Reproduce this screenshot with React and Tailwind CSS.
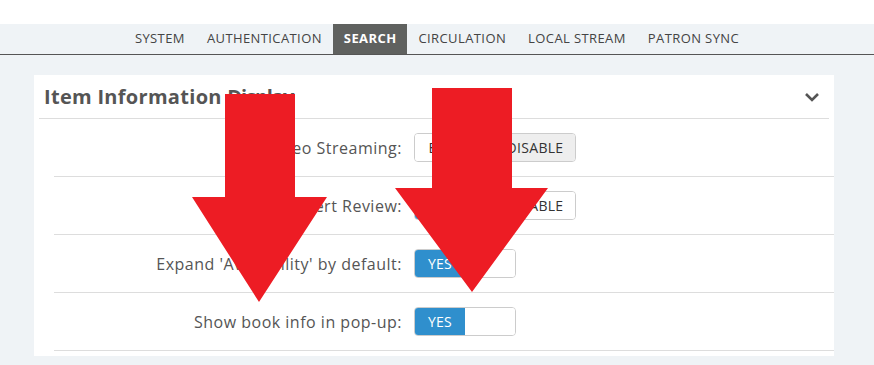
import React from "react";

const tabs = ["SYSTEM", "AUTHENTICATION", "SEARCH", "CIRCULATION", "LOCAL STREAM", "PATRON SYNC"];

const Toggle = ({ left, right, active, wide }) => {
  const w = wide ? "w-[80px]" : "w-[50px]";
  return (
    <div className="flex h-[29px] rounded-[4px] border border-[#cccccc] overflow-hidden text-[14px] tracking-[0.3px]">
      <div
        className={`${w} flex items-center justify-center ${
          active === "left" ? "bg-[#2f8fcd] text-white" : "bg-white text-[#333]"
        }`}
      >
        {left}
      </div>
      <div
        className={`${w} flex items-center justify-center ${
          active === "right" ? "bg-[#eeeeee] text-[#333]" : "bg-white text-[#333]"
        }`}
      >
        {right}
      </div>
    </div>
  );
};

const Row = ({ label, children }) => (
  <div className="ml-[20px] h-[58px] flex items-center border-b border-[#dddddd]">
    <div className="w-[348px] text-right text-[16px] tracking-[0.5px] text-[#555555]">{label}</div>
    <div className="ml-[12px]">{children}</div>
  </div>
);

export default function App() {
  return (
    <div
      className="relative w-[874px] h-[365px] overflow-hidden bg-[#eff3f6]"
      style={{ fontFamily: "'Open Sans', 'Noto Sans', sans-serif" }}
    >
      <div className="h-[24px] bg-white" />
      <nav className="h-[31px] flex justify-center border-b border-[#555555] text-[13px] tracking-[0.4px] text-[#444]">
        {tabs.map((t) => (
          <div
            key={t}
            className={`px-[11px] flex items-center ${
              t === "SEARCH" ? "bg-[#5f615f] text-white font-bold" : ""
            }`}
          >
            {t}
          </div>
        ))}
      </nav>

      <div className="mt-[20px] ml-[34px] w-[800px] bg-white pb-[5px]">
        <div className="mx-[5px] h-[44px] flex items-center justify-between border-b border-[#dddddd] pl-[5px] pr-[9px]">
          <h2 className="text-[20px] font-bold tracking-[0.3px] text-[#555555]">
            Item Information <span className="tracking-[-1px]">Display</span>
          </h2>
          <svg width="16" height="10" viewBox="0 0 16 10">
            <path d="M2 2 L8 8 L14 2" fill="none" stroke="#555" strokeWidth="2.6" />
          </svg>
        </div>
        <Row label="Video Streaming:">
          <Toggle left="ENABLE" right="DISABLE" active="right" wide />
        </Row>
        <Row label="Expert Review:">
          <Toggle left="ENABLE" right="DISABLE" active="left" wide />
        </Row>
        <Row label="Expand 'Availability' by default:">
          <Toggle left="YES" right="" active="left" />
        </Row>
        <Row label="Show book info in pop-up:">
          <Toggle left="YES" right="" active="left" />
        </Row>
      </div>

      <svg className="absolute inset-0 pointer-events-none" width="874" height="365">
        <polygon
          points="225,94 295,94 295,197 327,197 259,302 192,197 225,197"
          fill="#ed1c24"
        />
        <polygon
          points="432,88 512,88 512,188 548,188 472,292 395,188 432,188"
          fill="#ed1c24"
        />
      </svg>
    </div>
  );
}
